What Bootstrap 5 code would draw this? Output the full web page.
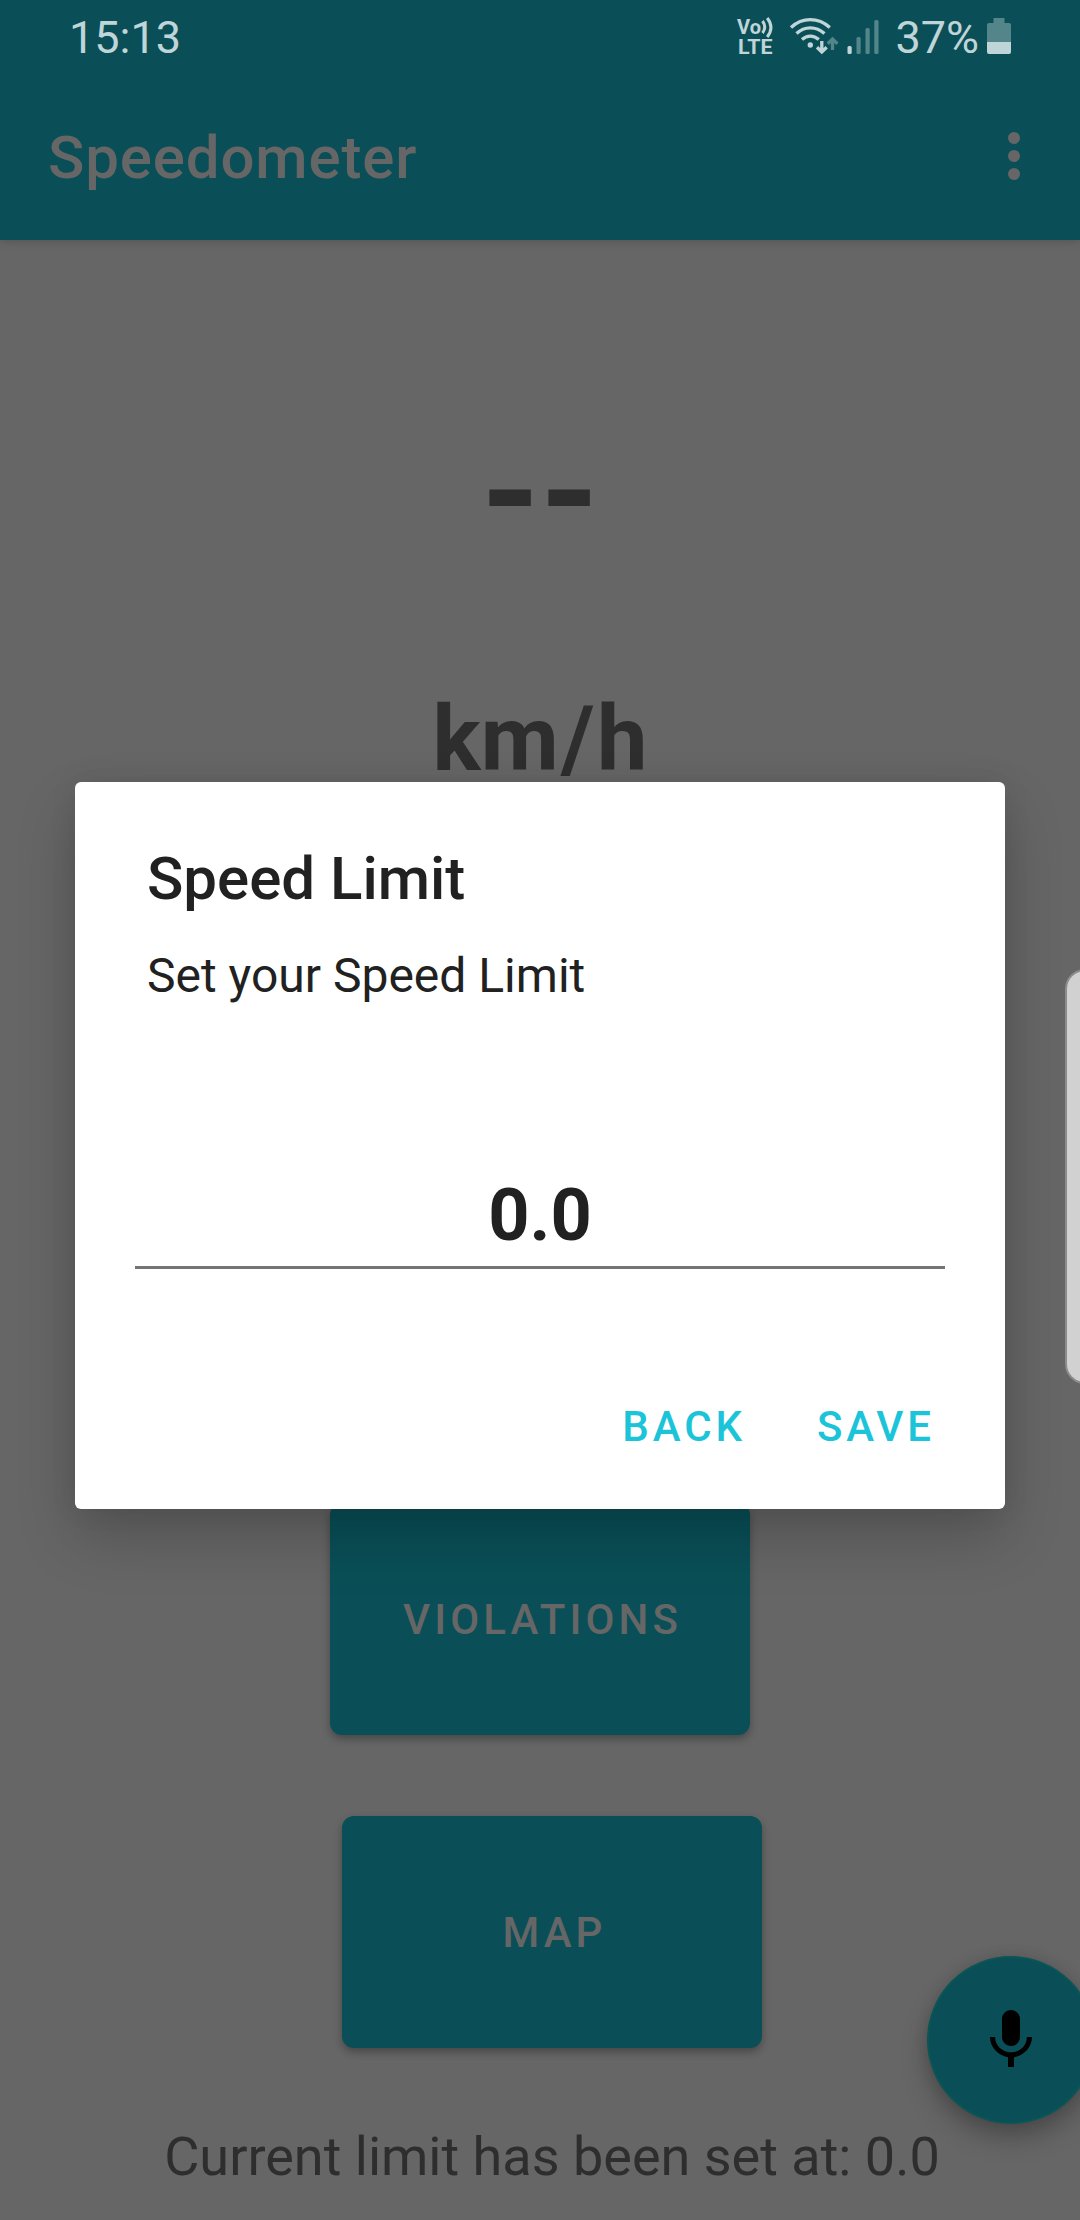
<!DOCTYPE html>
<html lang="en">
<head>
<meta charset="utf-8">
<meta name="viewport" content="width=device-width, initial-scale=1">
<title>Speedometer</title>
<link href="https://cdn.jsdelivr.net/npm/bootstrap@5.3.0/dist/css/bootstrap.min.css" rel="stylesheet">
<style>
  body { font-family: Roboto, "Liberation Sans", sans-serif; background: #666; color: #2e2e2e; }
  .screen { width: 1080px; height: 2220px; }
  .app-header { background: #0a4f57; height: 240px; box-shadow: 0 2px 8px rgba(0,0,0,.16); }
  .status-bar { height: 74px; padding: 0 69px 0 69px; color: #c0d5d8; font-size: 45px; line-height: 75px; }
  .app-title { font-size: 60px; font-weight: 500; color: #666; line-height: 72px; letter-spacing: .85px; padding-top: 2px; }
  .toolbar { height: 166px; padding: 0 48px; }
  .speed-value { font-size: 150px; font-weight: 700; line-height: 176px; margin-top: 165px; }
  .speed-unit { font-size: 90px; font-weight: 700; line-height: 106px; margin-top: 106px; }
  .unit-slash { margin: 0 2.5px; }
  .tile-btn { width: 420px; height: 232px; border: 0; border-radius: 12px; background: #0a4f57; color: #666; font-size: 42px; font-weight: 500; letter-spacing: 4.1px; padding-left: 17px; box-shadow: 0 4px 9px rgba(0,0,0,.3); }
  .tile-first { margin-top: 710px; }
  .tile-second { margin-top: 81px; margin-left: 24px; }
  .limit-note { font-size: 54px; line-height: 64px; margin-top: 77px; margin-left: 24px; }
  .overlay-dialog { top: 782px; left: 75px; width: 930px; height: 727px; border: 0; border-radius: 6px; background: #fff; color: #212121; box-shadow: 0 28px 60px rgba(0,0,0,.2), 0 0 28px rgba(0,0,0,.08); }
  .dialog-title { font-size: 60px; font-weight: 500; line-height: 72px; padding: 61px 0 0 72px; }
  .dialog-text { font-size: 48px; line-height: 56px; padding: 33px 0 0 72px; }
  .limit-field { width: 810px; margin: 137px 0 0 60px; height: 128px; padding: 24px 0 0; border: 0; border-bottom: 3px solid #757575; border-radius: 0; background: none; color: #212121; font-size: 72px; font-weight: 700; line-height: 84px; text-align: center; }
  .dialog-actions { padding: 133px 70px 0 0; gap: 71px; }
  .text-btn { color: #1bc4d8; font-size: 42px; font-weight: 500; line-height: 50px; letter-spacing: 3.9px; padding: 0; border: 0; }
  .mic-btn { left: 927px; top: 1956px; width: 168px; height: 168px; border: 2px solid #0b5556; background: #0a4f57; box-shadow: 0 14px 26px rgba(0,0,0,.26), 0 0 14px rgba(0,0,0,.1); }
  .edge-handle { left: 1065px; top: 969px; width: 40px; height: 415px; border: 2px solid #8c8c8c; border-radius: 20px; background: #d1d1d1; }
</style>
</head>
<body>
<div class="screen position-relative overflow-hidden">
  <header class="app-header">
    <div class="status-bar d-flex justify-content-between">
      <span>15:13</span>
      <div class="d-flex">
        <svg width="60" height="74" viewBox="729 0 60 74" fill="#c0d5d8" font-family="Roboto, sans-serif" font-weight="700" font-size="20.500">
          <text x="737" y="33.500" textLength="24" lengthAdjust="spacingAndGlyphs">Vo</text><text x="738" y="53.500" textLength="34.500" lengthAdjust="spacingAndGlyphs">LTE</text>
          <path d="M762.500 21q4.500 6 0 12M767.200 18q7.500 9.500 0 19" fill="none" stroke="#c0d5d8" stroke-width="3"/>
        </svg>
        <svg width="98" height="74" viewBox="790 0 98 74" fill="none" stroke="#c0d5d8" stroke-width="3.300">
          <path d="M792 27.500q8.500-7.800 19.300-7.800t19.500 7.800M797.500 33.500q6-5.700 13.800-5.700t14.200 5.700M803 39.500q3.700-3.400 8.300-3.400t8.500 3.400"/>
          <circle cx="811.300" cy="45" r="2.700" fill="#c0d5d8" stroke="none"/>
          <path d="M822.800 41v11M818 47.300l4.800 4.700 4.900-4.700"/>
          <path d="M833.500 50V39M828.700 43.800l4.800-4.700 4.900 4.700" stroke="#54858a"/>
          <g stroke="none" fill="#54858a">
            <rect x="848.500" y="46" width="4.200" height="8" rx="1.500" fill="#c0d5d8"/>
            <rect x="857.500" y="37" width="4.200" height="17" rx="1.500"/>
            <rect x="866.500" y="28" width="4.200" height="26" rx="1.500"/>
            <rect x="875.300" y="20" width="4.200" height="34" rx="1.500"/>
          </g>
        </svg>
        <span class="ms-2 me-2">37%</span>
        <svg width="24" height="74" viewBox="0 0 24 74"><path d="M0 42V25q0-2 2-2h4.500v-5h11v5H22q2 0 2 2v17z" fill="#54858a"/><path d="M0 42h24v10q0 2-2 2H2q-2 0-2-2z" fill="#c0d5d8"/></svg>
      </div>
    </div>
    <div class="toolbar d-flex justify-content-between align-items-center">
      <div class="app-title">Speedometer</div>
      <svg width="36" height="72" viewBox="0 0 36 72" fill="#666"><circle cx="18" cy="17" r="6"/><circle cx="18" cy="35" r="6"/><circle cx="18" cy="53" r="6"/></svg>
    </div>
  </header>

  <main class="d-flex flex-column align-items-center">
    <div class="speed-value">--</div>
    <div class="speed-unit">km<span class="unit-slash">/</span>h</div>
    <button class="btn tile-btn tile-first">VIOLATIONS</button>
    <button class="btn tile-btn tile-second">MAP</button>
    <div class="limit-note">Current limit has been set at: 0.0</div>
  </main>

  <button class="btn mic-btn rounded-circle position-absolute p-0 d-flex align-items-center justify-content-center" aria-label="Voice">
    <svg width="72" height="72" viewBox="0 0 24 24"><path d="M12 14c1.660 0 3-1.340 3-3V5c0-1.660-1.340-3-3-3S9 3.340 9 5v6c0 1.660 1.340 3 3 3zm5.300-3c0 3-2.540 5.100-5.300 5.100S6.700 14 6.700 11H5c0 3.410 2.720 6.230 6 6.720V21h2v-3.280c3.280-.48 6-3.300 6-6.720h-1.700z"/></svg>
  </button>

  <section class="card overlay-dialog position-absolute" role="dialog" aria-label="Speed Limit">
    <div class="dialog-title">Speed Limit</div>
    <div class="dialog-text">Set your Speed Limit</div>
    <input class="limit-field" type="text" value="0.0" aria-label="Limit">
    <div class="dialog-actions d-flex justify-content-end">
      <button class="btn text-btn">BACK</button>
      <button class="btn text-btn">SAVE</button>
    </div>
  </section>
  <div class="edge-handle position-absolute"></div>
</div>
<script src="https://cdn.jsdelivr.net/npm/bootstrap@5.3.0/dist/js/bootstrap.bundle.min.js"></script>
</body>
</html>
